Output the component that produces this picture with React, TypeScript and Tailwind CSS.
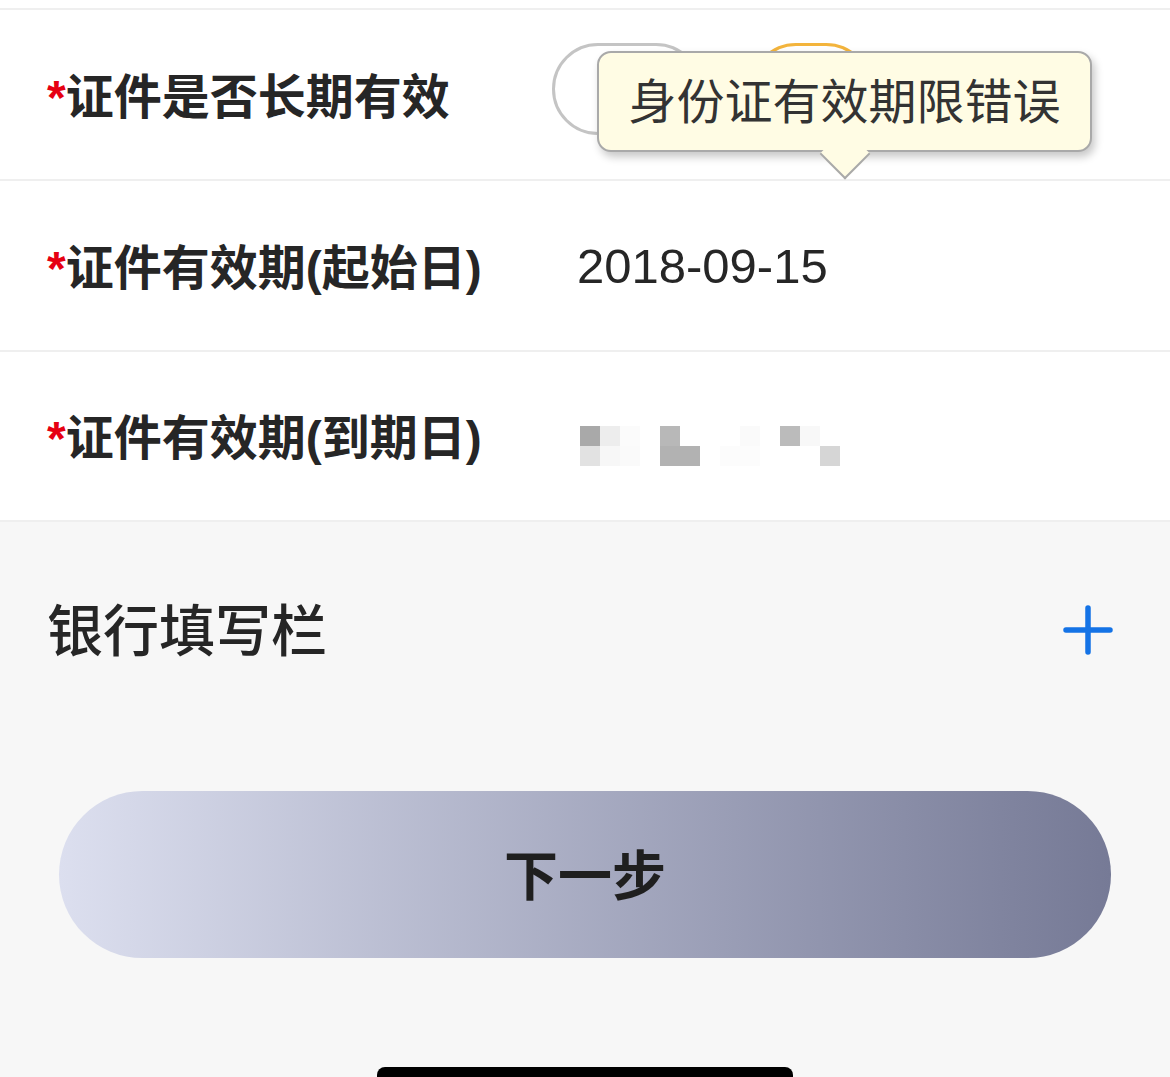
const cjk = { fontFamily: '"Liberation Sans", "Noto Sans CJK SC", sans-serif' };

const mosaic: string[][] = [
  ['bg-[#a9a9a9]', 'bg-[#ededed]', 'bg-[#fbfbfb]', 'bg-white', 'bg-[#b8b8b8]', 'bg-white', 'bg-white', 'bg-white', 'bg-[#fafafa]', 'bg-white', 'bg-[#bbbbbb]', 'bg-[#f8f8f8]', 'bg-white'],
  ['bg-[#e2e2e2]', 'bg-[#f7f7f7]', 'bg-[#fafafa]', 'bg-white', 'bg-[#b2b2b2]', 'bg-[#b2b2b2]', 'bg-white', 'bg-[#fcfcfc]', 'bg-[#fcfcfc]', 'bg-white', 'bg-white', 'bg-white', 'bg-[#d6d6d6]'],
];

function Label({ text }: { text: string }) {
  return (
    <div className="mt-[6px] w-[505px] shrink-0 text-[48px] font-bold leading-none text-[#262626]">
      <span className="text-[#e60012]">*</span>
      {text}
    </div>
  );
}

function Tooltip() {
  return (
    <div className="absolute left-[597px] top-[41px] h-[101px] w-[495px] rounded-[14px] border-2 border-[#a9a9a9] bg-[#fffce4] shadow-[3px_5px_8px_rgba(0,0,0,0.22)]">
      <div className="flex h-full items-center justify-center pt-[3px] text-[48px] leading-none text-[#333333]">
        身份证有效期限错误
      </div>
      <div className="absolute bottom-[-22px] left-[228px] h-[36px] w-[36px] rotate-45 border-b-2 border-r-2 border-[#a9a9a9] bg-[#fffce4]" />
    </div>
  );
}

export default function App() {
  return (
    <div className="flex min-h-[1077px] w-[1170px] flex-col bg-[#f7f7f7]" style={cjk}>
      <div className="bg-white">
        <div className="h-[10px] border-b-2 border-[#efefef]" />

        <div className="relative flex h-[171px] items-center border-b-2 border-[#efefef] pl-[47px]">
          <Label text="证件是否长期有效" />
          <div className="mb-[11px] flex items-center gap-[48px]">
            <div className="h-[92px] w-[150px] rounded-full border-[3px] border-[#c4c4c4] bg-white" />
            <div className="h-[92px] w-[122px] rounded-full border-[3px] border-[#f3b43c] bg-white" />
          </div>
          <Tooltip />
        </div>

        <div className="flex h-[171px] items-center border-b-2 border-[#efefef] pl-[47px]">
          <Label text="证件有效期(起始日)" />
          <div className="mt-[2px] pl-[25px] text-[49px] leading-none text-[#262626]">2018-09-15</div>
        </div>

        <div className="flex h-[170px] items-center border-b-2 border-[#efefef] pl-[47px]">
          <Label text="证件有效期(到期日)" />
          <div className="mt-[20px] flex flex-col pl-[28px]">
            {mosaic.map((row, r) => (
              <div key={r} className="flex">
                {row.map((c, i) => (
                  <div key={i} className={`h-[20px] w-[20px] ${c}`} />
                ))}
              </div>
            ))}
          </div>
        </div>
      </div>

      <div className="flex h-[216px] items-center justify-between pl-[47px] pr-[57px]">
        <div className="mt-[4px] text-[56px] font-medium leading-none text-[#262626]">银行填写栏</div>
        <svg width="50" height="50" viewBox="0 0 50 50" fill="none">
          <path d="M25 3v44M3 25h44" stroke="#1473e6" strokeWidth="5.5" strokeLinecap="round" />
        </svg>
      </div>

      <div className="mt-[53px] px-[59px]">
        <button className="flex h-[167px] w-full items-center justify-center rounded-full bg-gradient-to-r from-[#dcdfef] to-[#767a96] pt-[4px] text-[54px] font-bold leading-none text-[#1f1f1f]">
          下一步
        </button>
      </div>

      <div className="mt-auto flex justify-center">
        <div className="h-[10px] w-[416px] rounded-t-[8px] bg-black" />
      </div>
    </div>
  );
}
